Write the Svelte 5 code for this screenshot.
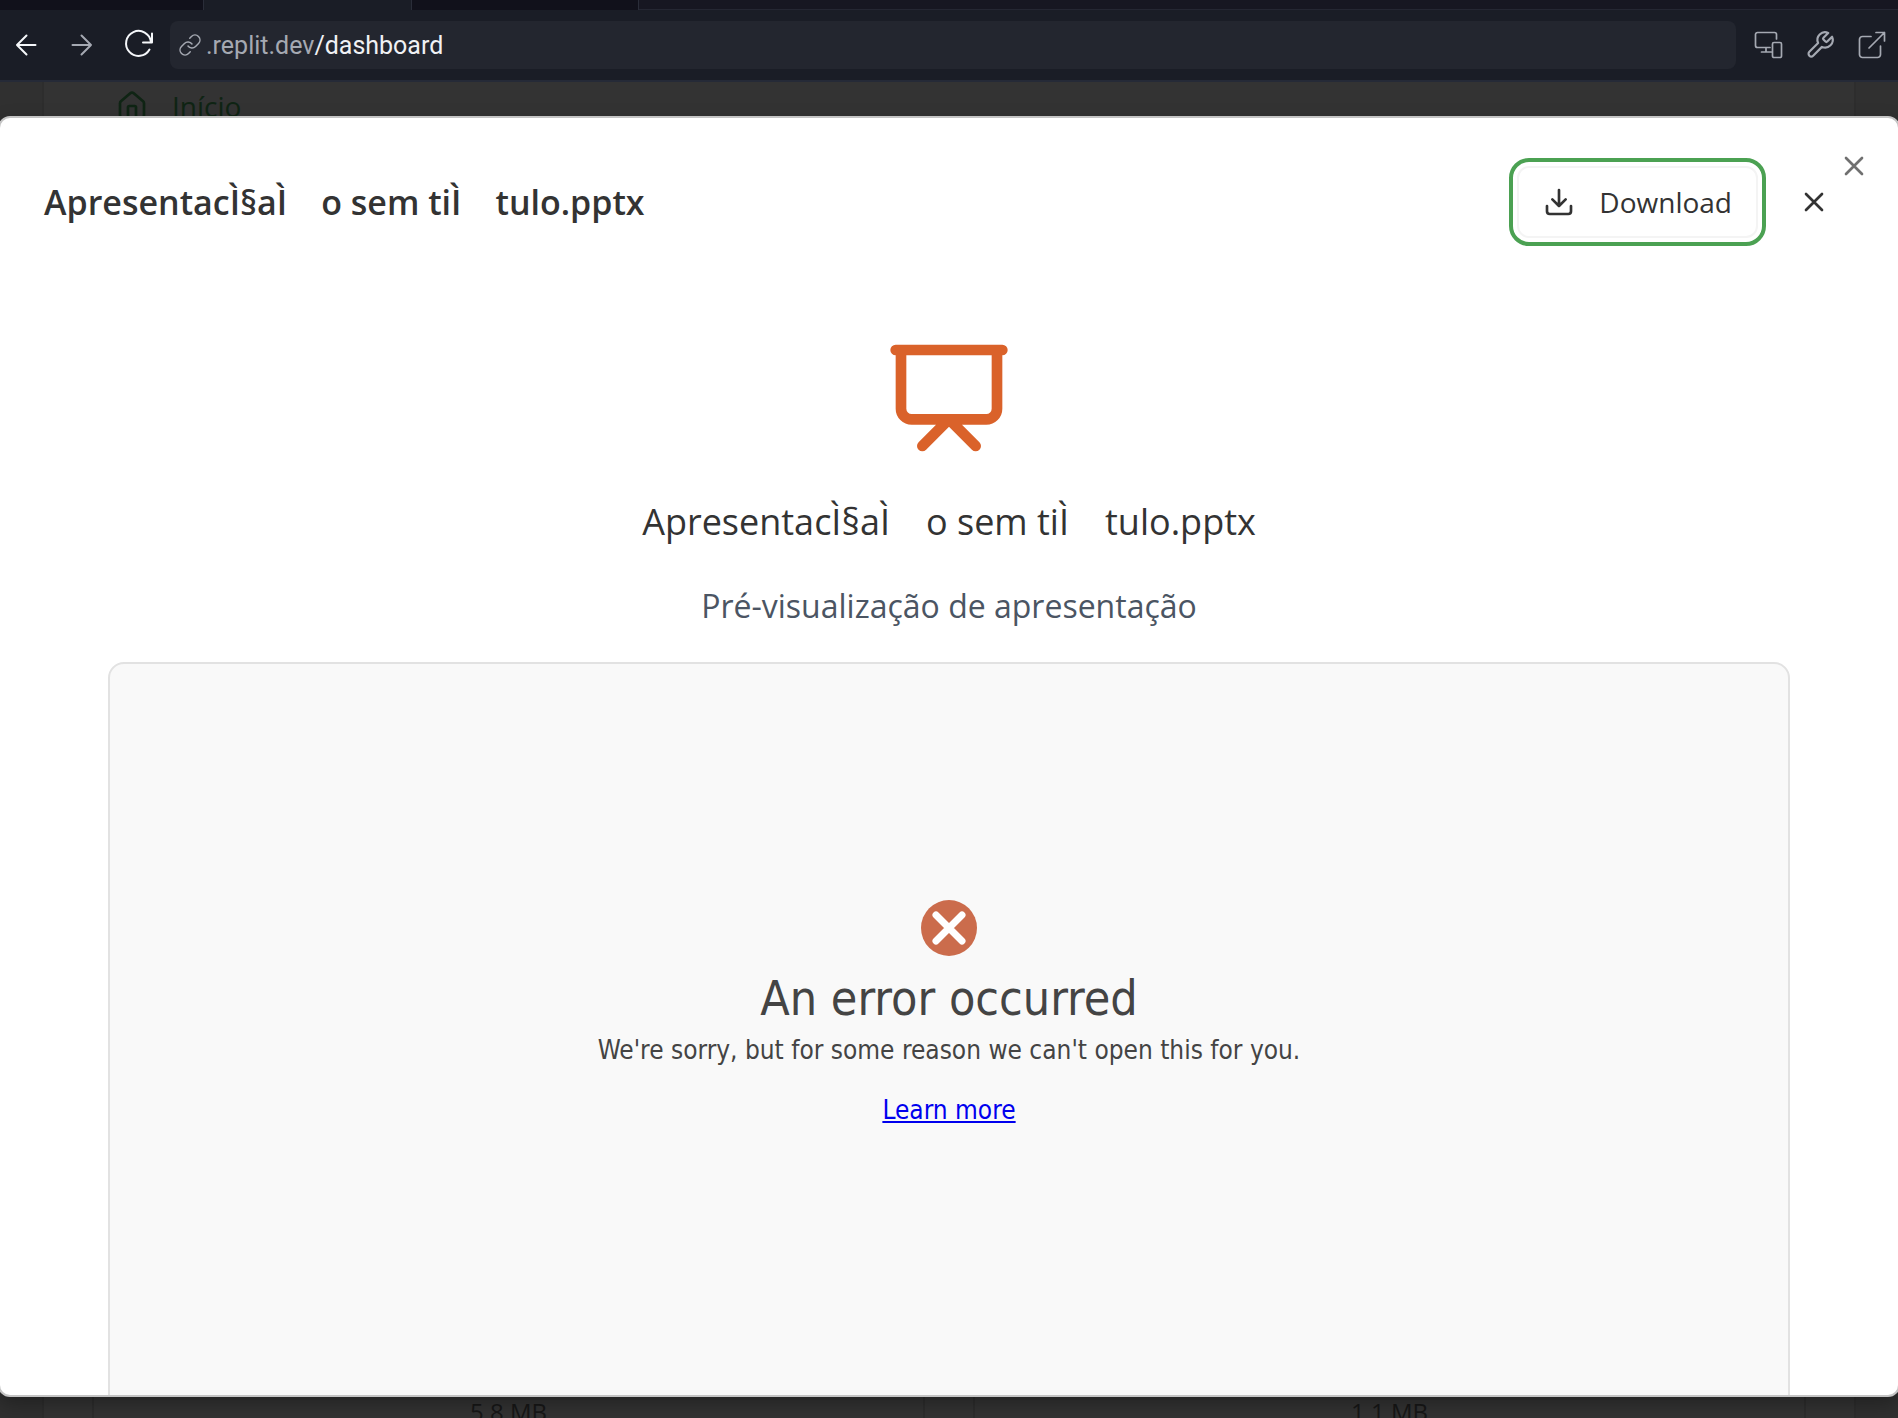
<script>
  const fileName = 'ApresentacÌ§aÌ\u2003o sem tiÌ\u2003tulo.pptx';
  const sizes = ['5.8 MB', '1.1 MB'];
</script>

{#snippet cross()}
  <svg class="icon" viewBox="0 0 24 24" aria-hidden="true"><path d="M18 6 6 18M6 6l12 12" /></svg>
{/snippet}

<div class="app">
  <div class="tabs" aria-hidden="true">
    <span class="tab first"></span><span class="tab active"></span><span class="tab last"></span>
  </div>
  <nav class="toolbar" aria-label="Browser">
    <button class="tool bright" aria-label="Back">
      <svg class="nav-icon" viewBox="0 0 24 24"><path d="M21.500 12H3M12.500 2.500 3 12l9.500 9.500" /></svg>
    </button>
    <button class="tool" aria-label="Forward">
      <svg class="nav-icon" viewBox="0 0 24 24"><path d="M2.500 12H21M11.500 2.500 21 12l-9.500 9.500" /></svg>
    </button>
    <button class="tool bright reload" aria-label="Reload">
      <svg viewBox="0 0 28 28"><path d="M28 2.500v9h-9M27 11A12.500 12.500 0 1 0 25.500 18.500" /></svg>
    </button>
    <a class="address" href="/dashboard">
      <svg viewBox="0 0 24 24" aria-hidden="true"><path d="M10 13a5 5 0 0 0 7.540.540l3-3a5 5 0 0 0-7.070-7.070l-1.720 1.710M14 11a5 5 0 0 0-7.540-.540l-3 3a5 5 0 0 0 7.070 7.070l1.710-1.710" /></svg>
      <span class="url"><span class="host">.replit.dev</span>/dashboard</span>
    </a>
    <div class="actions">
      <button class="tool" aria-label="Devices">
        <svg viewBox="0 0 28 28"><path d="M22.500 8V3.500a2 2 0 0 0-2-2h-17a2 2 0 0 0-2 2v11a2 2 0 0 0 2 2H16M12 16.500V21M7.500 21H17M20 11.500h6a1.500 1.500 0 0 1 1.500 1.500v12a1.500 1.500 0 0 1-1.500 1.500h-6a1.500 1.500 0 0 1-1.500-1.500V13a1.500 1.500 0 0 1 1.500-1.500z" /></svg>
      </button>
      <button class="tool" aria-label="Tools">
        <svg viewBox="1 1 22 22"><path d="M14.700 6.300a1 1 0 0 0 0 1.400l1.600 1.600a1 1 0 0 0 1.400 0l3.770-3.770a6 6 0 0 1-7.940 7.940l-6.910 6.910a2.120 2.120 0 0 1-3-3l6.910-6.910a6 6 0 0 1 7.940-7.940l-3.760 3.760z" /></svg>
      </button>
      <button class="tool" aria-label="Open in new tab">
        <svg viewBox="0 0 28 28"><path d="M18 1.500h8.500V10M26.500 1.500 11 17M13 5.500H4.500a3 3 0 0 0-3 3v15a3 3 0 0 0 3 3h15a3 3 0 0 0 3-3V15" /></svg>
      </button>
    </div>
  </nav>

  <div class="stage">
    <div class="page">
      <div class="panel">
        <a class="home" href="/">
          <svg class="icon" viewBox="0 0 24 24" aria-hidden="true"><path d="M15 21v-8a1 1 0 0 0-1-1h-4a1 1 0 0 0-1 1v8M3 10a2 2 0 0 1 .700-1.500l7-6a2 2 0 0 1 2.600 0l7 6A2 2 0 0 1 21 10v9a2 2 0 0 1-2 2H5a2 2 0 0 1-2-2z" /></svg>
          Início
        </a>
        <div class="cards">
          {#each sizes as size}
            <div class="card">{size}</div>
          {/each}
        </div>
      </div>
    </div>

    <div class="dialog" role="dialog" aria-labelledby="title">
      <button class="dismiss" aria-label="Close">{@render cross()}</button>
      <header>
        <h1 id="title">{fileName}</h1>
        <button class="download">
          <svg class="icon" viewBox="0 0 24 24" aria-hidden="true"><path d="M21 15v4a2 2 0 0 1-2 2H5a2 2 0 0 1-2-2v-4M7 10l5 5 5-5M12 15V3" /></svg>
          Download
        </button>
        <button class="close" aria-label="Close preview">{@render cross()}</button>
      </header>
      <main>
        <svg class="board" viewBox="0 0 24 24" aria-hidden="true"><path d="M2 3h20M21 3v11a2 2 0 0 1-2 2H5a2 2 0 0 1-2-2V3M7 21l5-5 5 5" /></svg>
        <h2>{fileName}</h2>
        <p class="caption">Pré-visualização de apresentação</p>
        <section class="frame">
          <svg class="error" viewBox="0 0 58 58" aria-hidden="true"><circle cx="29" cy="29" r="28" /><path d="M16 16 42 42M42 16 16 42" /></svg>
          <h3>An error occurred</h3>
          <p>We're sorry, but for some reason we can't open this for you.</p>
          <a href="#learn">Learn more</a>
        </section>
      </main>
    </div>
  </div>
</div>

<style>
  :global(body) { background: #323232; }
  .app, .app * { box-sizing: border-box; }
  .app {
    height: 100vh;
    display: flex;
    flex-direction: column;
    overflow: hidden;
    font-family: "Open Sans", "Noto Sans", sans-serif;
    color: #333;
  }
  button { border: 0; background: none; font: inherit; color: inherit; padding: 0; }
  h1, h2, h3, p { margin: 0; font-weight: 400; }
  svg { display: block; flex: none; fill: none; stroke: currentColor; stroke-width: 2; stroke-linecap: round; stroke-linejoin: round; }
  .icon { width: 32px; height: 32px; }

  .tabs { flex: none; display: flex; height: 10px; background: #171722; border-bottom: 1px solid #252733; }
  .tab { height: 10px; background: #11111b; }
  .first { width: 203px; }
  .active { width: 209px; background: #1a1d26; border: solid #2a2d39; border-width: 0 1px; }
  .last { width: 227px; border-right: 1px solid #2a2d39; }
  .toolbar {
    flex: none;
    display: flex;
    align-items: center;
    height: 72px;
    padding: 0 12px 0 14px;
    background: #1a1d26;
    border-bottom: 2px solid #252a37;
    color: #a5a9b2;
  }
  .tool { flex: none; margin-right: 32px; }
  .tool svg { width: 28px; height: 28px; overflow: visible; }
  .tool .nav-icon { width: 24px; height: 24px; }
  .bright { color: #f5f7fa; }
  .reload { margin: 0 18px 0 -2px; }
  .address {
    flex: 1;
    display: flex;
    align-items: center;
    gap: 4px;
    height: 48px;
    padding: 0 8px;
    border-radius: 8px;
    background: #23262f;
    color: #f0f1f4;
    font: 25px/32px Roboto, sans-serif;
    text-decoration: none;
  }
  .address svg { width: 24px; height: 24px; stroke-width: 1.500; color: #a5a9b2; }
  .url { padding-top: 2px; }
  .host { color: #a5a9b2; }
  .actions { display: flex; gap: 24px; margin-left: 18px; }
  .actions .tool { margin: 0; }
  .actions svg { stroke-width: 1.700; }

  .stage { flex: 1; min-height: 0; display: grid; grid-template: minmax(0, 1fr) / minmax(0, 1fr); }
  .page, .dialog { grid-area: 1 / 1; }
  .page { display: flex; padding: 0 42px; background: #303030; overflow: hidden; }
  .panel { flex: 1; display: flex; flex-direction: column; justify-content: space-between; background: #333; border: solid #2d2d2d; border-width: 0 2px; }
  .home { display: flex; align-items: center; gap: 24px; padding: 5px 72px; color: #0f2414; font-size: 28px; line-height: 38px; text-decoration: none; }
  .cards { display: grid; grid-template-columns: 1fr 1fr; gap: 48px; height: 22px; padding: 0 48px; }
  .card { border: solid #2d2d2d; border-width: 0 2px; color: #171717; font-size: 24px; line-height: 32px; text-align: center; }

  .dialog {
    position: relative;
    margin: 34px -2px 21px;
    border: 2px solid #c4c4c4;
    border-radius: 12px;
    background: #fff;
    overflow: hidden;
    box-shadow: 0 8px 20px rgb(0 0 0 / 30%);
  }
  .dismiss { position: absolute; top: 32px; right: 28px; color: #707070; }
  header { display: flex; align-items: center; padding: 48px 68px 0 44px; }
  h1 { flex: 1; font-size: 34px; line-height: 48px; font-weight: 600; }
  .download {
    display: flex;
    align-items: center;
    gap: 24px;
    height: 72px;
    padding: 0 24px;
    border: 2px solid #f4f4f4;
    border-radius: 12px;
    outline: 4px solid #4ba152;
    outline-offset: 4px;
    font-size: 28px;
  }
  .close { margin-left: 40px; }
  main { display: flex; flex-direction: column; align-items: center; padding: 96px 108px 0; }
  .board { width: 128px; height: 128px; color: #da622a; }
  h2 { margin-top: 32px; font-size: 36px; line-height: 56px; }
  .caption { margin-top: 32px; font-size: 32px; line-height: 48px; color: #4b5563; }
  .frame {
    align-self: stretch;
    display: flex;
    flex-direction: column;
    align-items: center;
    height: 800px;
    margin-top: 32px;
    padding-top: 235px;
    border: 2px solid #e2e2e2;
    border-radius: 16px;
    background: #f9f9f9;
    color: #444;
    font: 26px/36px "DejaVu Sans Condensed", "DejaVu Sans", sans-serif;
  }
  .error { width: 58px; height: 58px; }
  .error circle { fill: #cb6c4c; stroke: none; }
  .error path { stroke: #fff; stroke-width: 7; }
  h3 { margin: 9px 0 2px; font-size: 48px; line-height: 64px; }
  .frame a { margin-top: 24px; color: #00e; text-decoration: underline; }
</style>
